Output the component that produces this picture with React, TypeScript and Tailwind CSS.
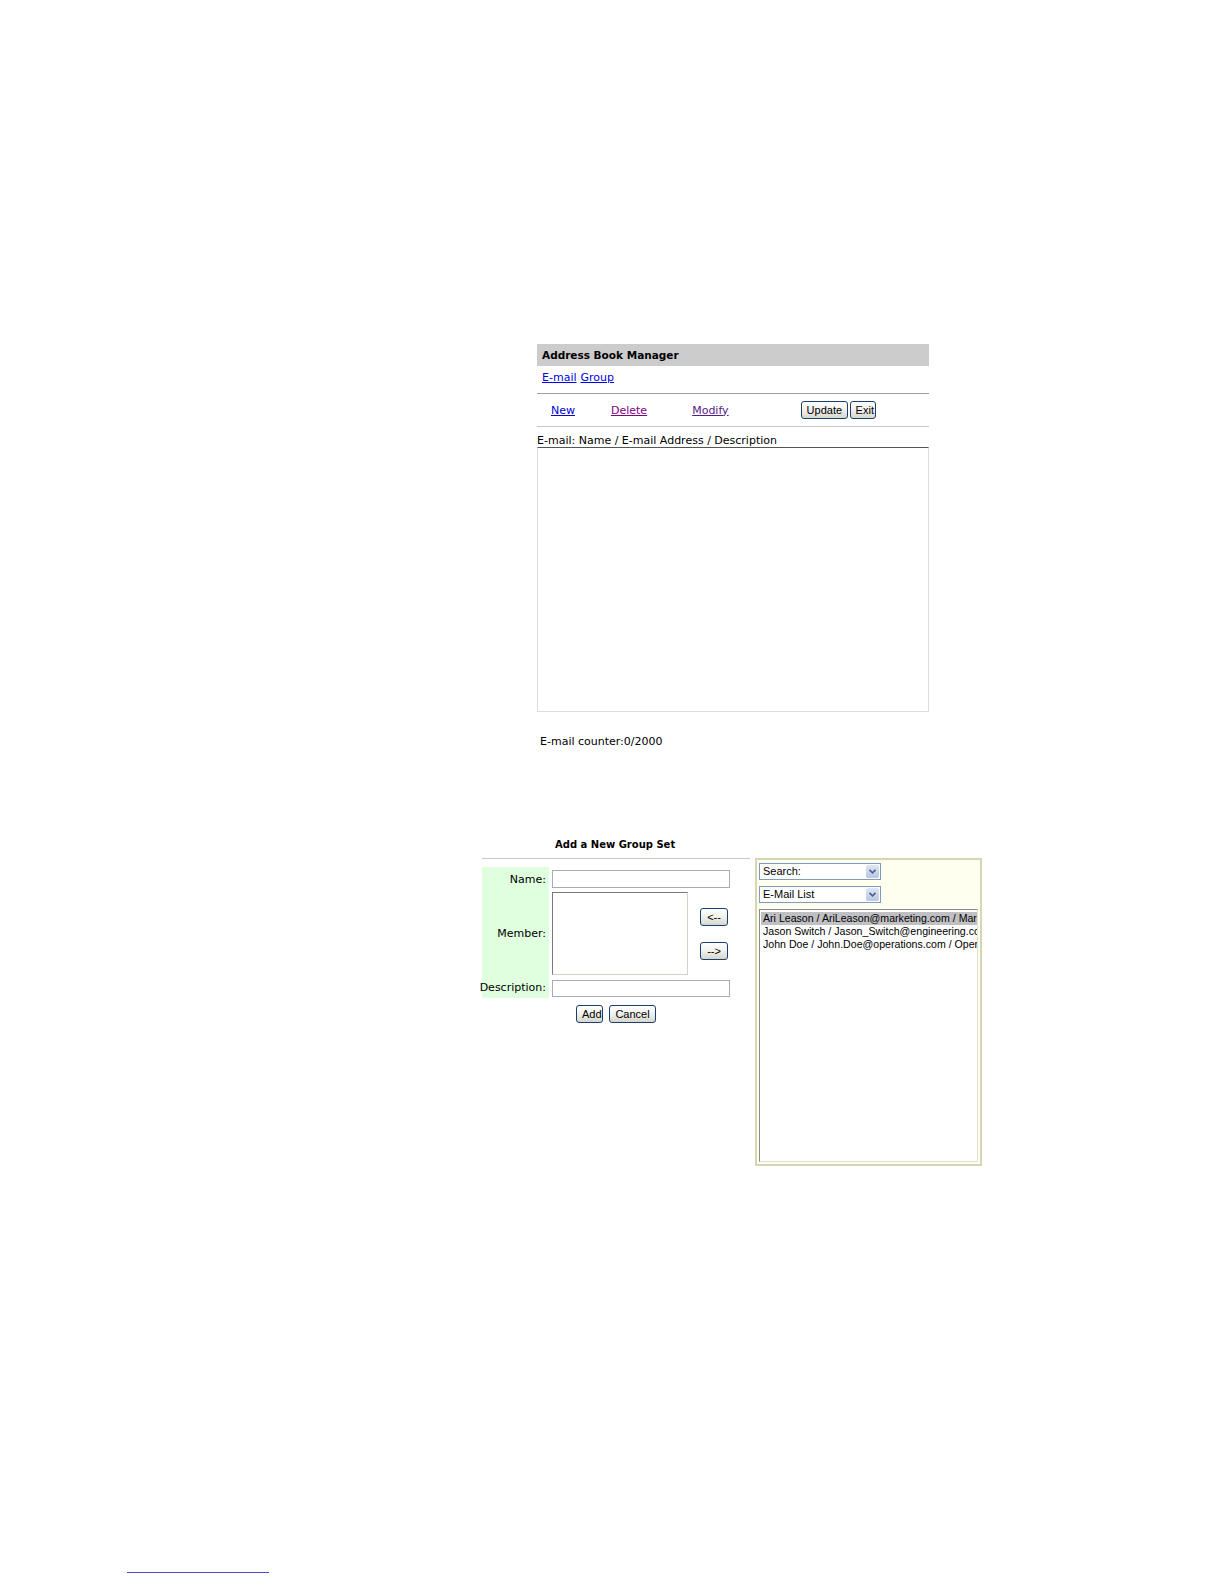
import React from "react";

const verdana = { fontFamily: '"DejaVu Sans", Verdana, sans-serif' };
const arial = { fontFamily: '"Liberation Sans", Arial, sans-serif' };

function XpButton({ label, className = "" }: { label: string; className?: string }) {
  return (
    <button
      className={`h-[18px] rounded-[3px] border border-[#1c3f6e] bg-gradient-to-b from-white via-[#f1f1ec] to-[#d6d6ce] px-[5px] text-[11px] leading-[14px] text-black ${className}`}
      style={arial}
    >
      {label}
    </button>
  );
}

function SelectBox({ label }: { label: string }) {
  return (
    <div className="flex h-[17px] w-[122px] border border-[#7f9db9] bg-white" style={arial}>
      <div className="flex-1 pl-[3px] text-[11px] leading-[15px] text-black">{label}</div>
      <div className="m-[1px] flex w-[13px] items-center justify-center rounded-[2px] bg-gradient-to-b from-[#dfe6f5] to-[#b7c6e6]">
        <svg width="7" height="5" viewBox="0 0 7 5">
          <path d="M0.5 0.8 L3.5 3.8 L6.5 0.8" stroke="#4d6185" strokeWidth="1.6" fill="none" />
        </svg>
      </div>
    </div>
  );
}

export default function App() {
  return (
    <div className="relative h-[1584px] w-full overflow-hidden bg-white">
      {/* Address Book Manager */}
      <div className="ml-[537px] flex w-[392px] flex-col pt-[344px]" style={verdana}>
        <div className="h-[22px] bg-[#cccccc] pl-[5px] text-[10.5px] font-bold leading-[22px] text-black">
          Address Book Manager
        </div>
        <div className="flex h-[27px] items-start gap-[4px] pl-[5px] pt-[5px] text-[11px] leading-[13px]">
          <a className="text-[#0000ee] underline">E-mail</a>
          <a className="text-[#0000ee] underline">Group</a>
        </div>
        <div className="h-[1px] bg-[#a0a0a0]" />
        <div className="flex h-[32px] items-center text-[11px] leading-[13px]">
          <a className="ml-[14px] text-[#0000cc] underline">New</a>
          <a className="ml-[36px] text-[#800080] underline">Delete</a>
          <a className="ml-[45px] text-[#551a8b] underline">Modify</a>
          <div className="ml-[72px] flex gap-[2px]">
            <XpButton label="Update" className="w-[47px]" />
            <XpButton label="Exit" className="w-[26px] px-0" />
          </div>
        </div>
        <div className="h-[1px] bg-[#c8c8c8]" />
        <div className="h-[20px] pt-[7px] text-[11px] leading-[13px] text-black">
          E-mail: Name / E-mail Address / Description
        </div>
        <div className="h-[265px] border border-[#dddddd] border-t-[#555555]" />
        <div className="pl-[3px] pt-[23px] text-[11px] leading-[13px] text-black">E-mail counter:0/2000</div>
      </div>

      {/* Add a New Group Set */}
      <div className="ml-[482px] mt-[90px] flex items-start gap-[5px]">
        <div className="flex w-[268px] flex-col" style={verdana}>
          <div className="pl-[73px] text-[10px] font-bold leading-[13px] text-black">Add a New Group Set</div>
          <div className="mt-[7px] h-[1px] bg-[#c8c8c8]" />
          <div className="mt-[8px] grid grid-cols-[67px_auto] text-[11px] leading-[13px] text-black">
            <div className="flex h-[23px] items-center justify-end bg-[#dfffdf] pr-[3px] pt-[1px]">Name:</div>
            <div className="ml-[3px] pt-[3px]">
              <div className="h-[18px] w-[178px] border border-[#a5acb2] bg-white" />
            </div>
            <div className="flex h-[86px] items-center justify-end bg-[#dfffdf] pr-[3px]">Member:</div>
            <div className="ml-[3px] flex pt-[2px]">
              <div className="h-[83px] w-[136px] border border-[#7a7a7a] border-b-[#d4d0c8] border-r-[#d4d0c8] bg-white" />
              <div className="ml-[12px] flex flex-col pt-[16px]">
                <XpButton label="<--" className="w-[28px] px-0 text-[9px]" />
                <XpButton label="-->" className="mt-[16px] w-[28px] px-0 text-[9px]" />
              </div>
            </div>
            <div className="flex h-[22px] items-center justify-end bg-[#dfffdf] pr-[3px]">Description:</div>
            <div className="ml-[3px] pt-[4px]">
              <div className="h-[17px] w-[178px] border border-[#a5acb2] bg-white" />
            </div>
          </div>
          <div className="mt-[7px] flex gap-[6px] pl-[94px]">
            <XpButton label="Add" className="w-[27px] px-0" />
            <XpButton label="Cancel" className="w-[47px]" />
          </div>
        </div>

        <div
          className="mt-[20px] flex h-[308px] w-[227px] flex-col gap-[6px] border-2 border-[#d6d6b4] bg-[#fffff0] pl-[2px] pt-[3px]"
          style={arial}
        >
          <SelectBox label="Search:" />
          <SelectBox label="E-Mail List" />
          <div className="mr-[2px] mb-[2px] flex-1 overflow-hidden border border-[#8a8a8a] border-b-[#e0e0d0] border-r-[#e0e0d0] bg-white pl-[1px] pt-[2px] text-[10.6px] leading-[13px] text-black">
            <div className="whitespace-nowrap bg-[#c0c0c4] pl-[2px]">Ari Leason / AriLeason@marketing.com / Marketing</div>
            <div className="whitespace-nowrap pl-[2px]">Jason Switch / Jason_Switch@engineering.com / Engineering</div>
            <div className="whitespace-nowrap pl-[2px]">John Doe / John.Doe@operations.com / Operations</div>
          </div>
        </div>
      </div>

      <div className="absolute left-[127px] top-[1572px] h-[1px] w-[142px] bg-[#4a4ad0]" />
    </div>
  );
}
